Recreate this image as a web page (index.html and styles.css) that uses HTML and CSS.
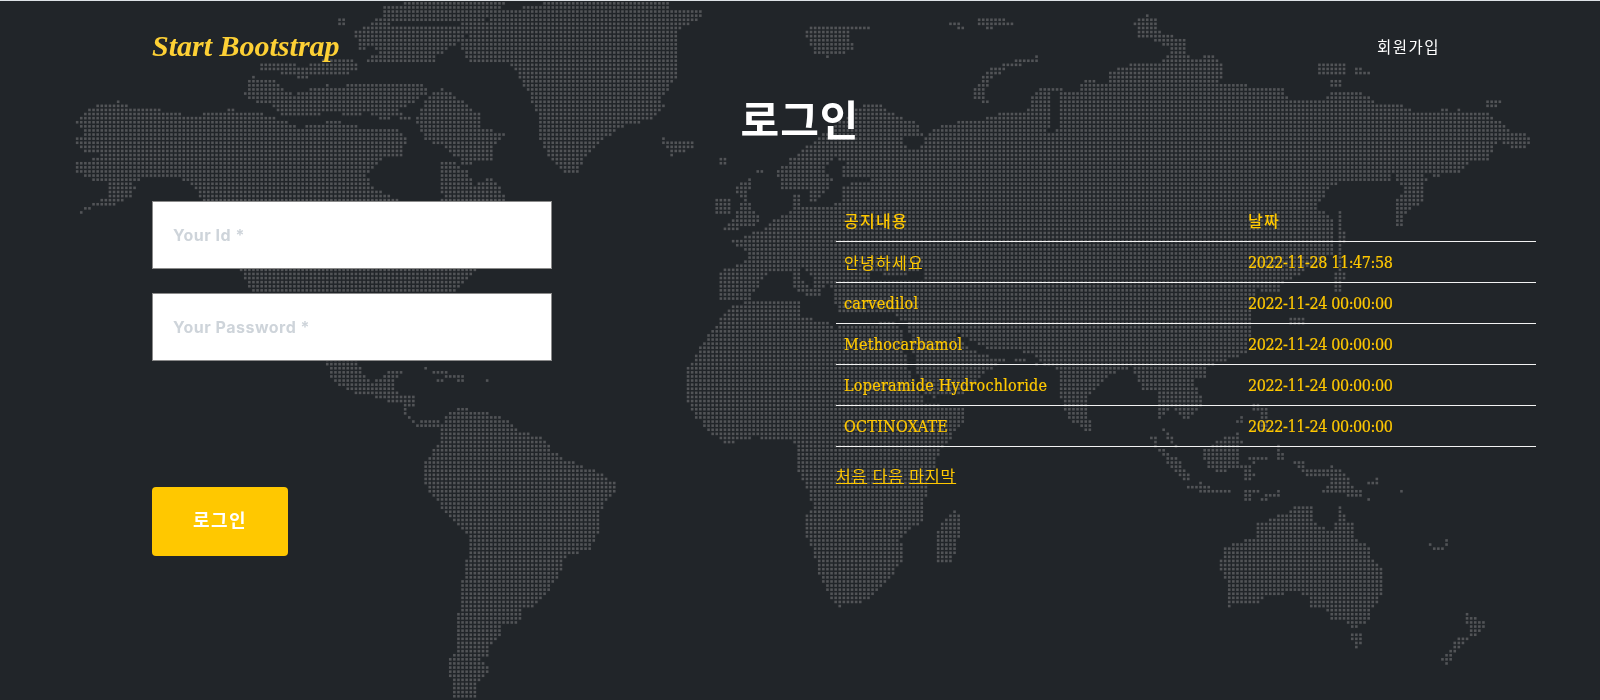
FILE: index.html
```html
<!DOCTYPE html>
<html lang="ko">
<head>
    <meta charset="UTF-8">
    <meta name="viewport" content="width=device-width, initial-scale=1.0">
    <title>로그인</title>
    <link rel="stylesheet" href="styles.css">
</head>
<body>
<div class="masthead">

    <!-- Dotted world map behind everything, drawn by map.js -->
    <canvas class="world-map" id="worldMap" width="1600" height="700"></canvas>

    <nav class="navbar">
        <a class="navbar-brand" href="#">Start Bootstrap</a>
        <a class="nav-link" href="#">회원가입</a>
    </nav>

    <h1 class="page-title">로그인</h1>

    <div class="content">
        <!-- Login form -->
        <form class="login-form">
            <input class="form-control" type="text" placeholder="Your Id *">
            <input class="form-control" type="password" placeholder="Your Password *">
            <button class="btn-login" type="button">로그인</button>
        </form>

        <!-- Notice list -->
        <div class="notices">
            <table class="notice-table">
                <thead>
                    <tr>
                        <th class="col-title">공지내용</th>
                        <th>날짜</th>
                    </tr>
                </thead>
                <tbody>
                    <tr>
                        <td class="ko">안녕하세요</td>
                        <td class="date">2022-11-28 11:47:58</td>
                    </tr>
                    <tr>
                        <td>carvedilol</td>
                        <td class="date">2022-11-24 00:00:00</td>
                    </tr>
                    <tr>
                        <td>Methocarbamol</td>
                        <td class="date">2022-11-24 00:00:00</td>
                    </tr>
                    <tr>
                        <td>Loperamide Hydrochloride</td>
                        <td class="date">2022-11-24 00:00:00</td>
                    </tr>
                    <tr>
                        <td>OCTINOXATE</td>
                        <td class="date">2022-11-24 00:00:00</td>
                    </tr>
                </tbody>
            </table>
            <div class="pager">
                <a href="#">처음</a>
                <a href="#">다음</a>
                <a href="#">마지막</a>
            </div>
        </div>
    </div>
</div>
<script src="map.js"></script>
</body>
</html>
```

FILE: styles.css
```css
* {
    box-sizing: border-box;
}
body {
    margin: 0;
    background-color: #212529;
    font-family: "DejaVu Serif Condensed", "DejaVu Serif", "Noto Sans CJK KR", serif;
    font-size: 16px;
    color: #ffc800;
}
.masthead {
    position: relative;
    height: 700px;
    overflow: hidden;
    border-top: 1px solid #dee2e6;
}
.world-map {
    position: absolute;
    top: -1px;
    left: 0;
}
.navbar {
    position: relative;
    display: flex;
    justify-content: space-between;
    align-items: center;
    height: 90px;
    padding: 0 160px 0 152px;
}
.navbar-brand {
    font-family: "Liberation Serif", serif;
    font-style: italic;
    font-weight: 700;
    font-size: 30px;
    color: #fdd035;
    text-decoration: none;
}
.nav-link {
    font-family: "Noto Sans CJK KR", sans-serif;
    font-size: 15.5px;
    letter-spacing: 1.5px;
    color: #fff;
    text-decoration: none;
}
.page-title {
    position: relative;
    margin: 0;
    height: 109px;
    line-height: 54px;
    font-family: "Noto Sans CJK KR", sans-serif;
    font-size: 42px;
    font-weight: 700;
    letter-spacing: 1px;
    text-align: center;
    color: #fff;
}
.content {
    position: relative;
    display: grid;
    grid-template-columns: 684px 700px;
    padding-left: 152px;
}
.login-form {
    display: flex;
    flex-direction: column;
    align-items: flex-start;
    gap: 24px;
    margin-top: 1px;
}
.form-control {
    width: 400px;
    height: 68px;
    padding: 0 20px;
    border: 1px solid #8a8a8a;
    background-color: #fff;
    font-family: Inter, sans-serif;
    font-size: 16px;
    font-weight: 700;
    letter-spacing: 0.5px;
}
.form-control::placeholder {
    color: #ced4da;
    opacity: 1;
}
.btn-login {
    width: 136px;
    height: 69px;
    margin-top: 102px;
    padding: 0 0 5px;
    border: none;
    border-radius: 4px;
    background-color: #ffc800;
    font-family: "Noto Sans CJK KR", sans-serif;
    font-size: 18px;
    font-weight: 700;
    letter-spacing: 1.5px;
    color: #fff;
}
.notice-table {
    width: 700px;
    border-collapse: collapse;
    table-layout: fixed;
}
.notice-table th, .notice-table td {
    height: 41px;
    padding: 9px 8px 7px;
    border-bottom: 1px solid #f2f2f2;
    line-height: 24px;
    font-weight: 400;
    letter-spacing: 0.25px;
    text-align: left;
    white-space: nowrap;
    -webkit-text-stroke: 0.2px #ffc800;
}
.notice-table th {
    padding: 8px;
    font-weight: 500;
    font-family: "Noto Sans CJK KR", sans-serif;
    letter-spacing: 1.3px;
    -webkit-text-stroke: 0;
}
.notice-table td.ko {
    padding: 8px;
    font-family: "Noto Sans CJK KR", sans-serif;
    letter-spacing: 1.3px;
    -webkit-text-stroke: 0;
}
.notice-table td.date {
    letter-spacing: -0.4px;
}
.col-title {
    width: 404px;
}
.pager {
    margin-top: 16px;
    line-height: 24px;
    font-family: "Noto Sans CJK KR", sans-serif;
    letter-spacing: 0.9px;
}
.pager a {
    color: #ffc800;
}
```

FILE: map.js
```js
// Outlines of the land, traced by hand. Each layer is either land or a sea
// that is cut out of whatever was drawn before it.
const layers = [
    // North America
    ['land', '77,123 93,107 117,102 132,107 160,110 185,115 203,115 208,112 233,110 267,115 287,122 300,128 313,123 340,122 367,128 400,128 407,142 403,155 410,160 385,157 367,173 370,187 393,197 420,215 443,200 440,163 457,163 470,173 473,187 492,178 503,190 507,200 500,240 473,277 453,292 252,292 240,270 215,230 203,200 193,187 177,177 150,177 133,183 137,190 127,200 107,208 93,207 67,220 93,203 110,197 107,183 90,180 77,173 77,163 100,157 100,153 83,152 73,142 87,133'],
    // Arctic islands
    ['land', '383,8 407,3 505,3 502,11 488,20 470,22 420,22 385,22'],
    ['land', '365,28 378,15 392,25 425,27 470,24 485,22 462,40 448,50 437,57 437,63 365,62 382,50 360,45 355,33'],
    ['land', '257,62 290,62 300,68 330,58 360,62 360,70 345,75 300,78 262,70'],
    ['land', '243,97 250,77 277,80 293,97 307,90 327,85 337,90 357,82 388,82 393,85 423,85 433,93 400,110 412,120 395,118 380,120 368,113 350,118 337,113 285,118 272,105 255,103'],
    ['land', '433,93 443,88 460,100 482,115 482,127 507,135 493,147 495,160 465,165 445,148 425,140 415,118'],
    ['land', '336,19 345,19 345,28 336,28'],
    ['land', '357,37 362,37 370,52 357,53'],
    // Greenland
    ['land', '510,10 550,2 670,2 670,10 703,12 703,17 680,30 680,53 677,80 660,100 667,107 650,120 620,128 590,153 577,175 570,175 553,163 537,137 540,123 537,113 530,97 517,73 507,63 470,63 460,43 493,17'],
    // Mexico and the Caribbean
    ['land', '325,355 357,355 360,367 370,383 383,377 390,370 403,370 393,387 397,393 413,397 417,408 390,403 378,398 368,395 357,395 330,380'],
    ['land', '410,362 433,370 453,373 472,378 463,383 438,375'],
    ['land', '485,381 491,381 491,385 485,385'],
    ['land', '438,381 445,381 445,385 438,385'],
    ['land', '402,395 417,395 417,408 407,408 407,415 417,423 433,418 445,424 440,428 415,428 404,414'],
    // South America
    ['land', '448,412 463,407 477,412 500,415 512,422 522,433 545,438 555,453 573,463 600,472 615,483 615,493 603,508 600,530 592,550 567,558 558,577 547,597 532,608 520,607 525,617 517,625 502,627 502,637 492,643 488,657 482,660 490,672 478,683 478,700 453,700 450,673 450,660 457,650 455,617 463,603 463,583 467,563 470,537 450,520 438,503 423,480 427,460 440,443 443,423'],
    // Iceland and the north Atlantic
    ['land', '658,137 670,140 693,142 693,148 673,157 662,143'],
    ['land', '721,157 727,157 727,167 721,167'],
    ['land', '758,170 763,170 763,174 758,174'],
    // Svalbard, Franz Josef, Novaya Zemlya, Severnaya Zemlya
    ['land', '802,30 828,25 872,28 850,33 855,52 827,58 813,53 810,40'],
    ['land', '938,20 963,24 965,30 955,28'],
    ['land', '973,23 987,17 1022,23 987,30'],
    ['land', '1038,57 1013,62 990,70 972,90 973,100 993,107 1003,113 983,97 990,80 1010,68 1040,62'],
    ['land', '1135,23 1147,15 1157,20 1160,30 1168,35 1188,40 1185,50 1165,48 1163,43 1153,40 1138,37'],
    ['land', '1317,65 1347,65 1347,75 1317,75'],
    ['land', '1355,68 1372,72 1372,75 1355,75'],
    ['land', '1330,80 1343,80 1343,87 1330,87'],
    ['land', '1488,102 1502,102 1502,104 1494,108 1488,108'],
    // Great Britain, Ireland
    ['land', '732,190 750,178 753,187 747,200 762,217 757,227 723,232 737,213 742,200'],
    ['land', '717,200 732,200 730,215 715,217'],
    // Eurasia
    ['land', '720,300 720,272 745,263 747,253 732,242 743,238 763,230 780,217 793,208 793,194 802,192 802,190 783,190 777,172 793,158 817,140 860,107 872,103 883,107 903,118 922,125 923,137 900,140 907,148 922,148 927,137 943,123 973,122 1003,113 1027,113 1030,100 1040,88 1060,88 1077,93 1085,80 1110,83 1110,72 1135,63 1163,62 1172,52 1187,52 1193,58 1213,57 1222,63 1222,80 1217,83 1243,85 1287,88 1288,103 1298,97 1300,102 1327,100 1333,93 1363,93 1377,103 1410,107 1413,113 1437,113 1447,108 1452,113 1457,110 1487,113 1500,122 1513,132 1533,137 1533,142 1523,152 1500,143 1495,147 1490,163 1470,163 1457,175 1433,177 1417,172 1393,172 1390,183 1377,182 1340,182 1327,193 1323,202 1313,207 1327,213 1333,218 1333,255 1300,275 1283,283 1280,293 1255,290 1253,330 1247,353 1223,363 1208,367 1208,380 1190,377 1205,403 1187,420 1172,407 1160,423 1168,430 1181,450 1174,447 1166,437 1160,425 1158,392 1143,392 1133,367 1113,373 1087,397 1092,433 1084,430 1070,420 1060,397 1057,367 1040,365 1010,360 1000,363 977,380 967,393 933,398 923,393 908,360 860,340 720,340'],
    // Kamchatka, Japan, Taiwan
    ['land', '1393,173 1417,172 1427,178 1425,198 1415,208 1405,215 1400,230 1395,228 1394,205 1403,190'],
    ['land', '1337,212 1343,212 1345,236 1349,240 1344,243 1342,255 1345,275 1343,292 1335,293 1333,280 1338,270 1338,230'],
    ['land', '1290,317 1307,317 1307,327 1290,327'],
    // South east Asia
    ['land', '1147,435 1154,435 1160,447 1179,460 1189,475 1189,482 1176,475 1164,457 1154,445'],
    ['land', '1204,450 1225,438 1239,433 1243,440 1239,470 1218,473 1206,467'],
    ['land', '1187,487 1202,483 1218,490 1243,493 1216,495 1191,490'],
    ['land', '1246,491 1260,491 1260,495 1252,495 1252,503 1246,503'],
    ['land', '1264,495 1279,491 1279,496 1270,498 1268,503 1260,503'],
    ['land', '1241,465 1258,463 1250,470 1258,477 1246,482 1244,473'],
    ['land', '1248,455 1267,455 1267,459 1248,459'],
    ['land', '1237,422 1244,415 1246,420 1240,430'],
    ['land', '1252,403 1271,410 1267,433 1262,433 1262,415 1252,410'],
    ['land', '1277,447 1283,445 1284,461 1278,461'],
    ['land', '1294,460 1302,460 1309,472 1332,467 1344,473 1355,487 1371,500 1359,497 1323,493 1334,480 1306,477 1294,465'],
    ['land', '1367,482 1380,477 1380,483 1367,487'],
    ['land', '1399,491 1405,491 1405,495 1399,495'],
    // Seas of Europe and Asia
    ['sea', '825,170 835,158 845,163 843,178 873,178 873,183 843,185 842,203 827,207 800,207 800,192 808,190 808,205 818,200 836,180'],
    ['sea', '1052,92 1058,92 1060,125 1052,135 1045,133 1052,125'],
    ['sea', '750,303 760,284 772,273 792,272 792,290 806,292 806,310 800,345 720,345 720,303'],
    ['sea', '803,268 815,278 812,287 800,276'],
    ['sea', '832,284 838,315 897,315 900,323 900,345 800,345 806,295 822,296 824,288'],
    ['sea', '873,273 897,277 923,270 925,280 873,280'],
    ['sea', '957,333 987,350 1030,353 1047,366 1025,360 985,356 965,345'],
    // Africa and Madagascar, then the Red Sea between Africa and Arabia
    ['land', '697,353 720,320 735,305 767,300 800,302 802,318 828,322 835,328 860,325 897,322 907,363 927,403 967,410 967,420 953,437 943,447 930,480 925,507 925,522 908,532 900,540 905,550 903,560 892,577 883,588 872,598 863,603 838,607 830,598 818,572 813,550 805,532 805,520 813,507 808,490 797,470 797,443 780,440 753,438 728,445 720,440 707,430 690,410 687,400 687,370'],
    ['land', '959,508 961,530 954,562 936,563 936,547 940,523'],
    ['sea', '900,322 907,322 923,393 935,404 927,404 907,365'],
    // Australia, Tasmania, New Zealand
    ['land', '1223,550 1244,540 1256,537 1256,525 1275,517 1290,513 1294,508 1315,508 1315,523 1332,532 1338,520 1338,500 1346,520 1353,522 1355,540 1369,542 1371,557 1384,568 1384,592 1375,607 1369,620 1359,628 1353,628 1348,623 1331,620 1329,612 1317,607 1311,608 1309,597 1298,593 1267,597 1262,603 1243,605 1229,607 1229,590 1223,573 1220,570'],
    ['land', '1350,633 1365,633 1359,648 1355,648'],
    ['land', '1464,607 1474,617 1486,623 1480,635 1472,637 1468,627'],
    ['land', '1461,635 1470,640 1457,652 1449,665 1440,660 1451,650'],
    ['land', '1428,541 1436,550 1442,548 1449,536 1451,539 1444,552 1434,553']
];

const PITCH = 4.1;
const OFFSET = 3.35;
const DOT = 2.6;

// Paint the outlines on a hidden canvas first, so it can be sampled
function paintOutlines(width, height) {
    const mask = document.createElement('canvas');
    mask.width = width;
    mask.height = height;
    const ctx = mask.getContext('2d');
    layers.forEach(([kind, points]) => {
        ctx.globalCompositeOperation = kind === 'sea' ? 'destination-out' : 'source-over';
        ctx.beginPath();
        points.split(' ').forEach(pair => {
            const [x, y] = pair.split(',').map(Number);
            ctx.lineTo(x, y);
        });
        ctx.closePath();
        ctx.fill();
    });
    return ctx.getImageData(0, 0, width, height);
}

// One square dot for every grid cell whose centre is on land
function drawMap() {
    const canvas = document.getElementById('worldMap');
    const pixels = paintOutlines(canvas.width, canvas.height);
    const ctx = canvas.getContext('2d');
    ctx.fillStyle = '#525457';
    for (let y = OFFSET; y < canvas.height; y += PITCH) {
        for (let x = OFFSET; x < canvas.width; x += PITCH) {
            const alpha = pixels.data[(Math.round(y) * canvas.width + Math.round(x)) * 4 + 3];
            if (alpha > 127) {
                ctx.fillRect(x - DOT / 2, y - DOT / 2, DOT, DOT);
            }
        }
    }
}

drawMap();
```
